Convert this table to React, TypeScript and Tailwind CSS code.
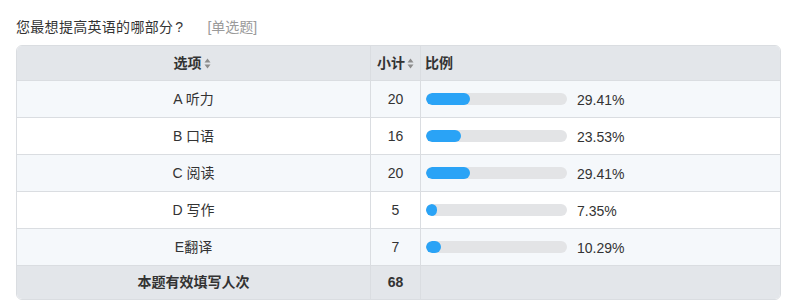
import React from 'react';

const rows = [
  { label: 'A 听力', count: 20, pct: 29.41 },
  { label: 'B 口语', count: 16, pct: 23.53 },
  { label: 'C 阅读', count: 20, pct: 29.41 },
  { label: 'D 写作', count: 5, pct: 7.35 },
  { label: 'E翻译', count: 7, pct: 10.29 },
];

const SortIcon = () => (
  <svg width="7" height="11" viewBox="0 0 7 11" className="ml-[2px] inline-block">
    <path d="M3.5 0.5 L6.5 4.6 H0.5 Z" fill="#8c8c8c" />
    <path d="M3.5 10.5 L6.5 6.4 H0.5 Z" fill="#8c8c8c" />
  </svg>
);

const App = () => {
  return (
    <div
      className="w-[788px] h-[302px] bg-white text-[#333] pt-[17px]"
      style={{ fontFamily: '"Liberation Sans", Arial, "Noto Sans CJK SC", sans-serif' }}
    >
      {/* Question title */}
      <div className="ml-4 flex items-center h-[20px] text-[14px] leading-[20px]">
        <span className="tracking-[0.3px]">您最想提高英语的哪部分<span className="ml-[2px]">?</span></span>
        <span className="ml-[24px] text-[#9a9a9a]">[单选题]</span>
      </div>

      {/* Result table */}
      <div className="ml-4 mr-[7px] mt-[8px] border border-[#dadde1] rounded-[6px] overflow-hidden text-[14px]">
        <div className="flex h-[35px] bg-[#e3e6ea] border-b border-[#dadde1] font-bold">
          <div className="w-[354px] border-r border-[#dadde1] flex items-center justify-center pr-[3px]">
            选项
            <SortIcon />
          </div>
          <div className="w-[50px] border-r border-[#dadde1] flex items-center justify-center">
            小计
            <SortIcon />
          </div>
          <div className="flex-1 flex items-center pl-[4px]">比例</div>
        </div>

        {rows.map((r, i) => (
          <div
            key={r.label}
            className={`flex h-[37px] border-b border-[#dadde1] ${i % 2 === 0 ? 'bg-[#f5f8fb]' : 'bg-white'}`}
          >
            <div className="w-[354px] border-r border-[#dadde1] flex items-center justify-center">
              {r.label}
            </div>
            <div className="w-[50px] border-r border-[#dadde1] flex items-center justify-center">
              {r.count}
            </div>
            <div className="flex-1 flex items-center pl-[5px]">
              <div className="w-[141px] h-[12px] rounded-full bg-[#e3e4e6] overflow-hidden">
                <div
                  className="h-full rounded-full bg-[#2aa3f6]"
                  style={{ width: `${Math.max(r.pct * 1.05, 8)}%` }}
                />
              </div>
              <span className="ml-[10px] mt-[2px]">{r.pct.toFixed(2)}%</span>
            </div>
          </div>
        ))}

        <div className="flex h-[33px] bg-[#e3e6ea] font-bold">
          <div className="w-[354px] border-r border-[#dadde1] flex items-center justify-center">
            本题有效填写人次
          </div>
          <div className="w-[50px] border-r border-[#dadde1] flex items-center justify-center">68</div>
          <div className="flex-1" />
        </div>
      </div>
    </div>
  );
};

export default App;
